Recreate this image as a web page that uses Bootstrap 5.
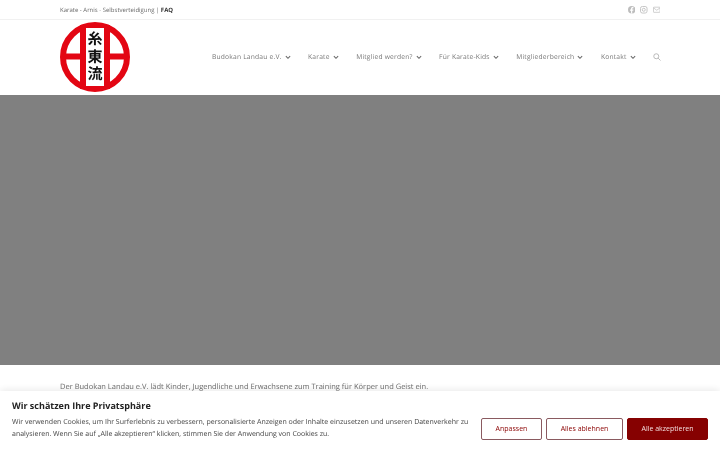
<!DOCTYPE html>
<html lang="de">
<head>
    <meta charset="UTF-8">
    <meta name="viewport" content="width=device-width, initial-scale=1.0">
    <title>Budokan Landau e.V.</title>
    <link href="https://cdn.jsdelivr.net/npm/bootstrap@5.3.0/dist/css/bootstrap.min.css" rel="stylesheet">
    <style>
        body {
            font-family: "Open Sans", "Liberation Sans", sans-serif;
            text-rendering: geometricPrecision;
            color: #666;
            background-color: #fff;
            overflow: hidden;
            opacity: .999;
        }
        .wrap-main {
            width: 600px;
            margin: 0 auto;
        }
        .top-strip {
            height: 20px;
            border-bottom: 1px solid #f1f1f1;
            font-size: 6px;
            line-height: 20px;
            color: #6a6a6a;
        }
        .top-strip b {
            color: #333;
            font-weight: 700;
        }
        .top-icons {
            gap: 5px;
        }
        .site-head {
            height: 75px;
        }
        .logo-box {
            width: 70px;
            height: 70px;
            margin-top: 2px;
        }
        .logo-kanji {
            font-family: "Noto Sans CJK JP", "Noto Sans CJK SC", sans-serif;
            font-size: 15px;
            font-weight: 700;
            fill: #111;
        }
        .main-menu {
            font-size: 6.700px;
            letter-spacing: .2px;
            color: #777;
            gap: 17.500px;
            margin-right: -1px;
        }
        .menu-chevron {
            margin-left: 3px;
        }
        .hero-area {
            height: 270px;
            background-color: #808080;
        }
        .intro-text {
            font-size: 7.500px;
            line-height: 14px;
            padding-top: 15px;
            color: #6b6b6b;
        }
        .cookie-bar {
            height: 59px;
            padding: 8px 12px 0;
            background-color: #fff;
            box-shadow: 0 -1px 8px rgba(0, 0, 0, .1);
            color: #444;
        }
        .cookie-bar h6 {
            font-family: "Open Sans", sans-serif;
            font-size: 9px;
            line-height: 14px;
            font-weight: 700;
            color: #222;
            margin-bottom: 4px;
        }
        .cookie-bar p {
            font-size: 7px;
            line-height: 12px;
            margin: 0;
            width: 462px;
        }
        .cookie-actions {
            gap: 4px;
            padding-top: 19px;
        }
        .btn-cookie {
            height: 22px;
            padding: 0;
            font-size: 7px;
            line-height: 18px;
            color: #8a0000;
            background-color: #fff;
            border: 1.500px solid #8a5a60;
            border-radius: 2px;
        }
        .btn-cookie.is-solid {
            color: #f3dede;
            background-color: #860000;
            border-color: #860000;
        }
    </style>
</head>
<body>
    <!-- Top bar -->
    <div class="top-strip">
        <div class="wrap-main d-flex justify-content-between">
            <span>Karate - Arnis - Selbstverteidigung | <b>FAQ</b></span>
            <span class="top-icons d-flex align-items-center">
                <svg width="7.500" height="7.500" viewBox="0 0 16 16"><circle cx="8" cy="8" r="8" fill="#bdbdbd"/><path d="M9 16V10h2.200l.4-2.600H9V6c0-.8.3-1.300 1.400-1.300h1.300V2.400c-.6-.1-1.300-.2-2-.2C7.800 2.200 6.500 3.400 6.500 5.600v1.800H4.300V10h2.200v6z" fill="#fff"/></svg>
                <svg width="7.500" height="7.500" viewBox="0 0 16 16" fill="none" stroke="#bdbdbd" stroke-width="1.800"><rect x="1" y="1" width="14" height="14" rx="4"/><circle cx="8" cy="8" r="3.200"/></svg>
                <svg width="7.500" height="7.500" viewBox="0 0 16 16" fill="none" stroke="#bdbdbd" stroke-width="1.500"><rect x="1" y="2.500" width="14" height="11" rx="1"/><path d="M1 4l7 5 7-5"/></svg>
            </span>
        </div>
    </div>

    <!-- Header -->
    <div class="site-head">
        <div class="wrap-main d-flex justify-content-between align-items-center h-100">
            <div class="logo-box align-self-start">
                <svg width="70" height="70" viewBox="0 0 70 70">
                    <circle cx="35" cy="35" r="32" fill="#fff" stroke="#e30613" stroke-width="6"/>
                    <rect x="2" y="31.500" width="66" height="6" fill="#e30613"/>
                    <rect x="20" y="3" width="6" height="64" fill="#e30613"/>
                    <rect x="44" y="3" width="6" height="64" fill="#e30613"/>
                    <rect x="26" y="6" width="18" height="58" fill="#fff"/>
                    <text class="logo-kanji" x="35" y="9" writing-mode="vertical-rl" letter-spacing="2.500">糸東流</text>
                </svg>
            </div>
            <div class="main-menu d-flex align-items-center">
                <span>Budokan Landau e.V.<svg class="menu-chevron" width="6" height="5" viewBox="0 0 7 5" fill="none" stroke="#666" stroke-width="1.200"><path d="M1 1l2.500 2.500L6 1"/></svg></span>
                <span>Karate<svg class="menu-chevron" width="6" height="5" viewBox="0 0 7 5" fill="none" stroke="#666" stroke-width="1.200"><path d="M1 1l2.500 2.500L6 1"/></svg></span>
                <span>Mitglied werden?<svg class="menu-chevron" width="6" height="5" viewBox="0 0 7 5" fill="none" stroke="#666" stroke-width="1.200"><path d="M1 1l2.500 2.500L6 1"/></svg></span>
                <span>Für Karate-Kids<svg class="menu-chevron" width="6" height="5" viewBox="0 0 7 5" fill="none" stroke="#666" stroke-width="1.200"><path d="M1 1l2.500 2.500L6 1"/></svg></span>
                <span>Mitgliederbereich<svg class="menu-chevron" width="6" height="5" viewBox="0 0 7 5" fill="none" stroke="#666" stroke-width="1.200"><path d="M1 1l2.500 2.500L6 1"/></svg></span>
                <span>Kontakt<svg class="menu-chevron" width="6" height="5" viewBox="0 0 7 5" fill="none" stroke="#666" stroke-width="1.200"><path d="M1 1l2.500 2.500L6 1"/></svg></span>
                <svg width="8" height="8" viewBox="0 0 16 16" fill="none" stroke="#aaa" stroke-width="1.600" style="margin-top:-1px"><circle cx="6.500" cy="6.500" r="5"/><path d="M10.200 10.200L15 15"/></svg>
            </div>
        </div>
    </div>

    <!-- Hero -->
    <div class="hero-area"></div>

    <div class="wrap-main intro-text">
        Der Budokan Landau e.V. lädt Kinder, Jugendliche und Erwachsene zum Training für Körper und Geist ein.
    </div>

    <!-- Cookie banner -->
    <div class="cookie-bar fixed-bottom d-flex justify-content-between">
        <div>
            <h6>Wir schätzen Ihre Privatsphäre</h6>
            <p>Wir verwenden Cookies, um Ihr Surferlebnis zu verbessern, personalisierte Anzeigen oder Inhalte einzusetzen und unseren Datenverkehr zu analysieren. Wenn Sie auf „Alle akzeptieren“ klicken, stimmen Sie der Anwendung von Cookies zu.</p>
        </div>
        <div class="cookie-actions d-flex align-items-start">
            <button type="button" class="btn btn-cookie" style="width:61px">Anpassen</button>
            <button type="button" class="btn btn-cookie" style="width:77px">Alles ablehnen</button>
            <button type="button" class="btn btn-cookie is-solid" style="width:81px">Alle akzeptieren</button>
        </div>
    </div>

    <script src="https://cdn.jsdelivr.net/npm/bootstrap@5.3.0/dist/js/bootstrap.bundle.min.js"></script>
</body>
</html>
